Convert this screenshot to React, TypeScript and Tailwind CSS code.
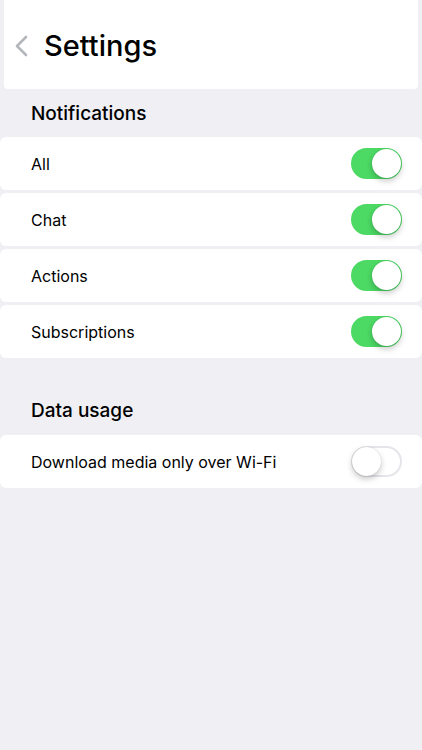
import React from "react";

const font = { fontFamily: "Inter, 'Noto Sans', sans-serif" };

function Toggle({ on }: { on: boolean }) {
  return (
    <div
      className={
        "relative h-[31px] w-[51px] rounded-full border-2 " +
        (on ? "border-[#4cd964] bg-[#4cd964]" : "border-[#e5e5ea] bg-white")
      }
    >
      <div
        className={
          "absolute top-[-1px] h-[29px] w-[29px] rounded-full bg-white shadow-[0_3px_6px_rgba(0,0,0,0.22),0_0_1px_rgba(0,0,0,0.2)] " +
          (on ? "right-[-1px]" : "left-[-1px]")
        }
      />
    </div>
  );
}

function Row({ label, on }: { label: string; on: boolean }) {
  return (
    <div className="flex h-[53px] items-center justify-between rounded-[6px] bg-white pl-[31px] pr-[20px]">
      <span className="pt-[1px] text-[16px] text-black">{label}</span>
      <Toggle on={on} />
    </div>
  );
}

export default function App() {
  return (
    <div className="min-h-[750px] w-full bg-[#efeff4] antialiased" style={font}>
      {/* Header */}
      <div className="px-[4px]">
        <header className="flex h-[89px] items-center gap-[16px] rounded-b-[4px] bg-white pl-[10px] pt-[2px]">
          <svg width="14" height="22" viewBox="0 0 14 22" fill="none">
            <path d="M12 2 L3 11 L12 20" stroke="#b3b6bb" strokeWidth="2.6" strokeLinecap="round" strokeLinejoin="round" />
          </svg>
          <h1 className="text-[29px] font-medium text-black">Settings</h1>
        </header>
      </div>

      {/* Notifications */}
      <div className="flex h-[48px] items-center pl-[31px] pt-[2px]">
        <h2 className="text-[19px] font-medium text-black">Notifications</h2>
      </div>
      <div className="flex flex-col gap-[3px]">
        <Row label="All" on={true} />
        <Row label="Chat" on={true} />
        <Row label="Actions" on={true} />
        <Row label="Subscriptions" on={true} />
      </div>

      {/* Data usage */}
      <div className="flex h-[77px] items-end pb-[10px] pl-[31px]">
        <h2 className="text-[19px] font-medium text-black">Data usage</h2>
      </div>
      <Row label="Download media only over Wi-Fi" on={false} />
    </div>
  );
}
